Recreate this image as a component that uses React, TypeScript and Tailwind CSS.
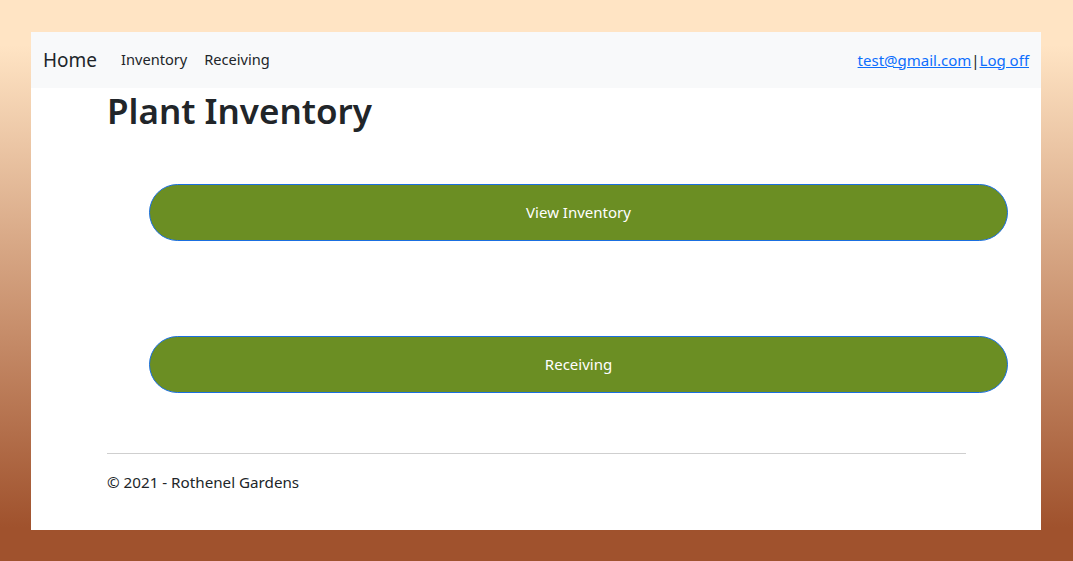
export default function App() {
	return (
		<div className="min-h-screen w-full bg-[linear-gradient(to_bottom,#ffe4c4_8%,#a0522d_94%)] pt-8 pb-[31px] pl-[31px] pr-8 font-['Noto_Sans',sans-serif] text-[#212529]">
			<div className="h-[498px] w-[1010px] bg-white">
				{/* Navbar */}
				<nav className="flex h-14 items-center bg-[#f8f9fa] pl-3 pr-3">
					<a href="#" className="mr-6 text-[19px] text-[#212529]">
						Home
					</a>
					<a href="#" className="mr-[17px] text-[14.6px] text-[#212529]">
						Inventory
					</a>
					<a href="#" className="text-[14.6px] text-[#212529]">
						Receiving
					</a>
					<div className="ml-auto flex items-center text-[15px]">
						<a href="#" className="text-[#0d6efd] underline">
							test@gmail.com
						</a>
						<span className="text-[#212529]">|</span>
						<a href="#" className="text-[#0d6efd] underline">
							Log off
						</a>
					</div>
				</nav>

				{/* Main content */}
				<main className="pl-[76px]">
					<h1 className="text-[35px] font-semibold leading-[46px]">Plant Inventory</h1>
					<div className="mt-[50px] flex flex-col gap-[95px] pl-[42px]">
						<button
							type="button"
							className="h-[57px] w-[859px] rounded-full border border-[#1a6fe0] bg-[#6b8e23] text-[15px] text-white"
						>
							View Inventory
						</button>
						<button
							type="button"
							className="h-[57px] w-[859px] rounded-full border border-[#1a6fe0] bg-[#6b8e23] text-[15px] text-white"
						>
							Receiving
						</button>
					</div>
					<hr className="mt-[60px] w-[859px] border-t border-[#cfcfcf]" />
					<footer className="pt-[17px] text-[15.2px]">© 2021 - Rothenel Gardens</footer>
				</main>
			</div>
		</div>
	);
}
